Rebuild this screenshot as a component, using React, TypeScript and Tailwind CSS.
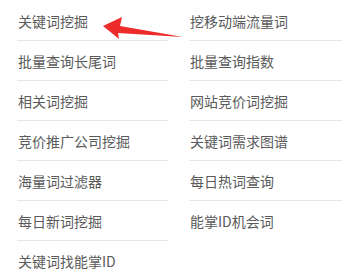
import React from "react";

const left = ["关键词挖掘", "批量查询长尾词", "相关词挖掘", "竞价推广公司挖掘", "海量词过滤器", "每日新词挖掘", "关键词找能掌ID"];
const right = ["挖移动端流量词", "批量查询指数", "网站竞价词挖掘", "关键词需求图谱", "每日热词查询", "能掌ID机会词"];

function Col({ items, w }: { items: string[]; w: string }) {
  return (
    <div className={`flex flex-col ${w}`}>
      {items.map((t, i) => (
        <div
          key={i}
          className={`h-[40px] flex items-center pl-[1px] text-[14px] text-[#5a5a5a] leading-none ${i < items.length - 1 ? "border-b border-[#e6e6e6]" : ""}`}
        >
          {t}
        </div>
      ))}
    </div>
  );
}

export default function App() {
  return (
    <div
      className="relative w-[353px] h-[280px] bg-white overflow-hidden"
      style={{ fontFamily: '"Noto Sans CJK SC", "Microsoft YaHei", sans-serif' }}
    >
      <div className="flex pl-[17px] pt-[1px] gap-x-[21px]">
        <Col items={left} w="w-[151px]" />
        <Col items={right} w="w-[153px]" />
      </div>
      <svg className="absolute left-0 top-0 pointer-events-none" width="353" height="280">
        <polygon points="103,26 122,17 120,26 183,37 118,33 119,39" fill="#ee2b2b" />
      </svg>
    </div>
  );
}
